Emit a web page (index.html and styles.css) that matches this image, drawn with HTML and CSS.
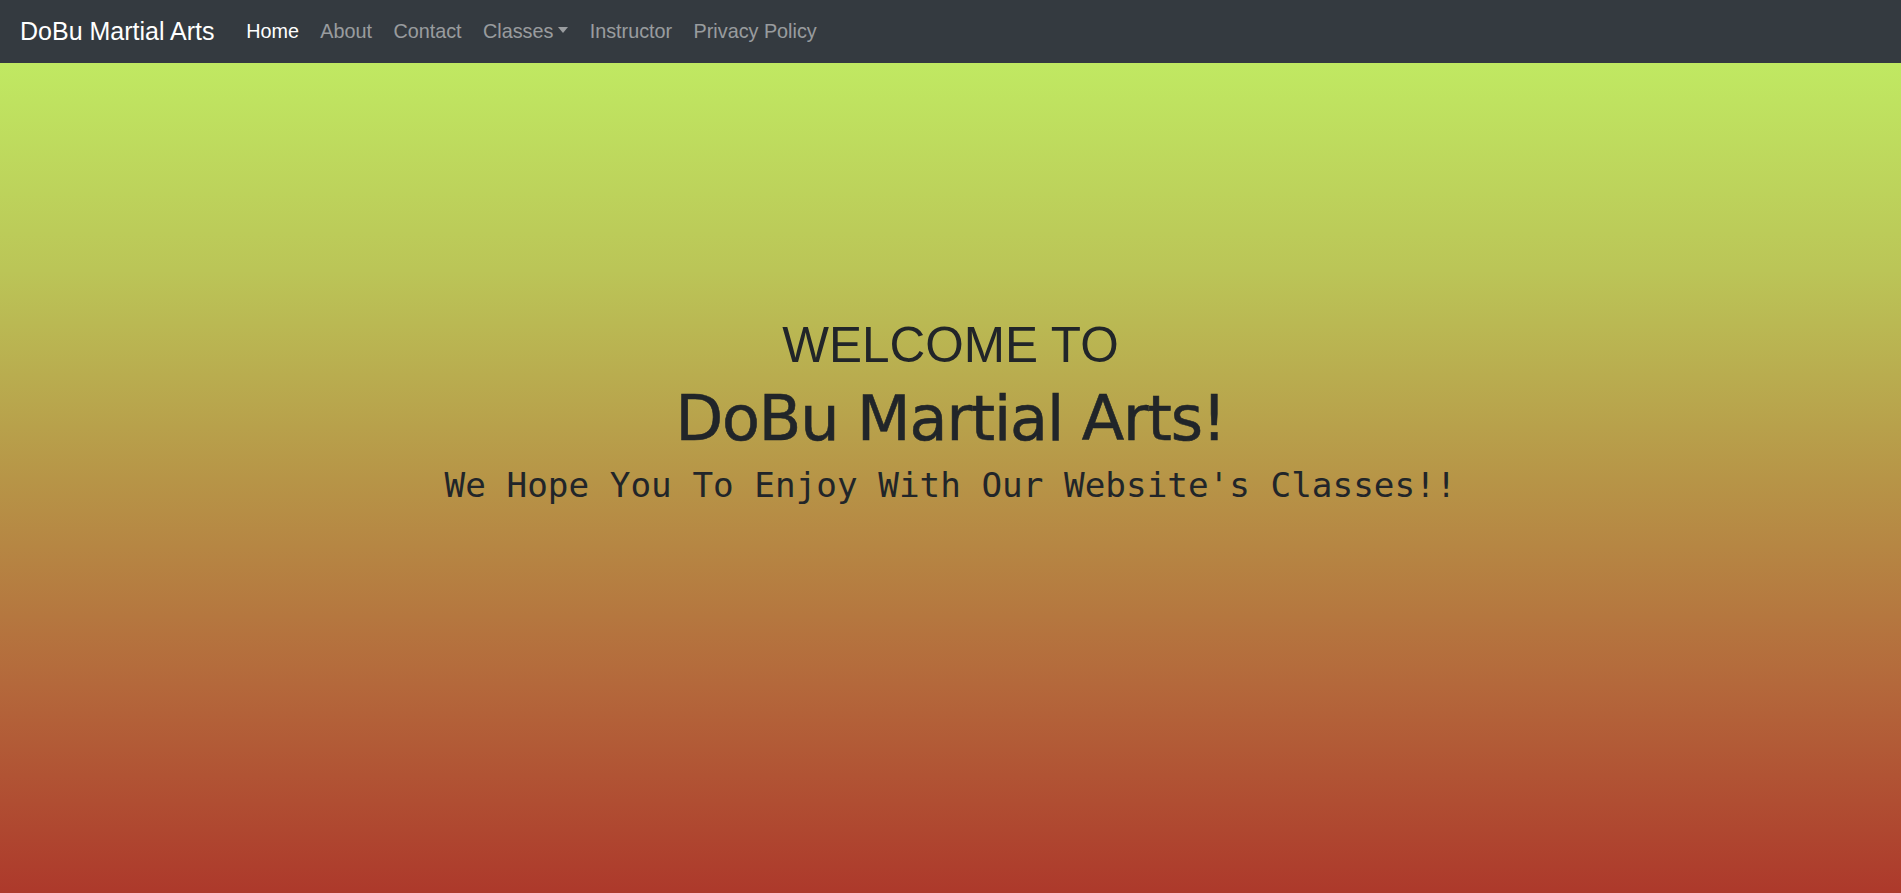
FILE: index.html
```html
<!DOCTYPE html>
<html lang="en">
<head>
<meta charset="utf-8">
<title>DoBu Martial Arts</title>
<link rel="stylesheet" href="styles.css">
</head>
<body>
<nav class="navbar">
  <a class="brand" href="#">DoBu Martial Arts</a>
  <ul class="nav">
    <li><a class="nav-link active" href="#">Home</a></li>
    <li><a class="nav-link" href="#">About</a></li>
    <li><a class="nav-link" href="#">Contact</a></li>
    <li><a class="nav-link dropdown" href="#">Classes<span class="caret"></span></a></li>
    <li><a class="nav-link" href="#">Instructor</a></li>
    <li><a class="nav-link" href="#">Privacy Policy</a></li>
  </ul>
</nav>
<main class="hero">
  <h1 class="welcome">WELCOME TO</h1>
  <h2 class="title">DoBu Martial Arts!</h2>
  <p class="tagline">We Hope You To Enjoy With Our Website's Classes!!</p>
</main>
</body>
</html>
```

FILE: styles.css
```css
html, body {
  margin: 0;
  padding: 0;
}
body {
  font-family: "Liberation Sans", Arial, sans-serif;
  background: #ad392b;
}
.navbar {
  height: 63px;
  background: #343a40;
  display: flex;
  align-items: center;
  padding: 0 20px;
  box-sizing: border-box;
}
.brand {
  color: #ffffff;
  text-decoration: none;
  font-size: 25px;
  margin-right: 21px;
  white-space: nowrap;
}
.nav {
  list-style: none;
  margin: 0;
  padding: 0;
  display: flex;
  align-items: center;
}
.nav-link {
  display: block;
  padding: 0 10.7px;
  font-size: 19.8px;
  color: rgba(255, 255, 255, 0.5);
  text-decoration: none;
  white-space: nowrap;
}
.nav-link.active {
  color: #ffffff;
}
.caret {
  display: inline-block;
  margin-left: 5px;
  vertical-align: 5px;
  border-top: 6px solid rgba(255, 255, 255, 0.5);
  border-left: 5.5px solid transparent;
  border-right: 5.5px solid transparent;
}
.hero {
  min-height: calc(100vh - 63px);
  box-sizing: border-box;
  padding-top: 252px;
  background: linear-gradient(to bottom, #c0e962 0%, #bbc557 25%, #b79547 50%, #b4683b 75%, #ad392b 100%);
  text-align: center;
  color: #212529;
  display: flex;
  flex-direction: column;
  align-items: center;
}
.welcome {
  margin: 0;
  font-family: "Liberation Sans", Arial, sans-serif;
  font-weight: normal;
  font-size: 49.5px;
  line-height: 60px;
}
.title {
  margin: 7px 0 0;
  font-family: "Comic Sans MS", "DejaVu Sans", sans-serif;
  font-weight: normal;
  font-size: 62px;
  letter-spacing: -1.1px;
  line-height: 74px;
  -webkit-text-stroke: 0.6px #212529;
}
.tagline {
  margin: 8px 0 0;
  font-family: Consolas, "DejaVu Sans Mono", monospace;
  font-size: 34.3px;
  line-height: 42px;
}
```
